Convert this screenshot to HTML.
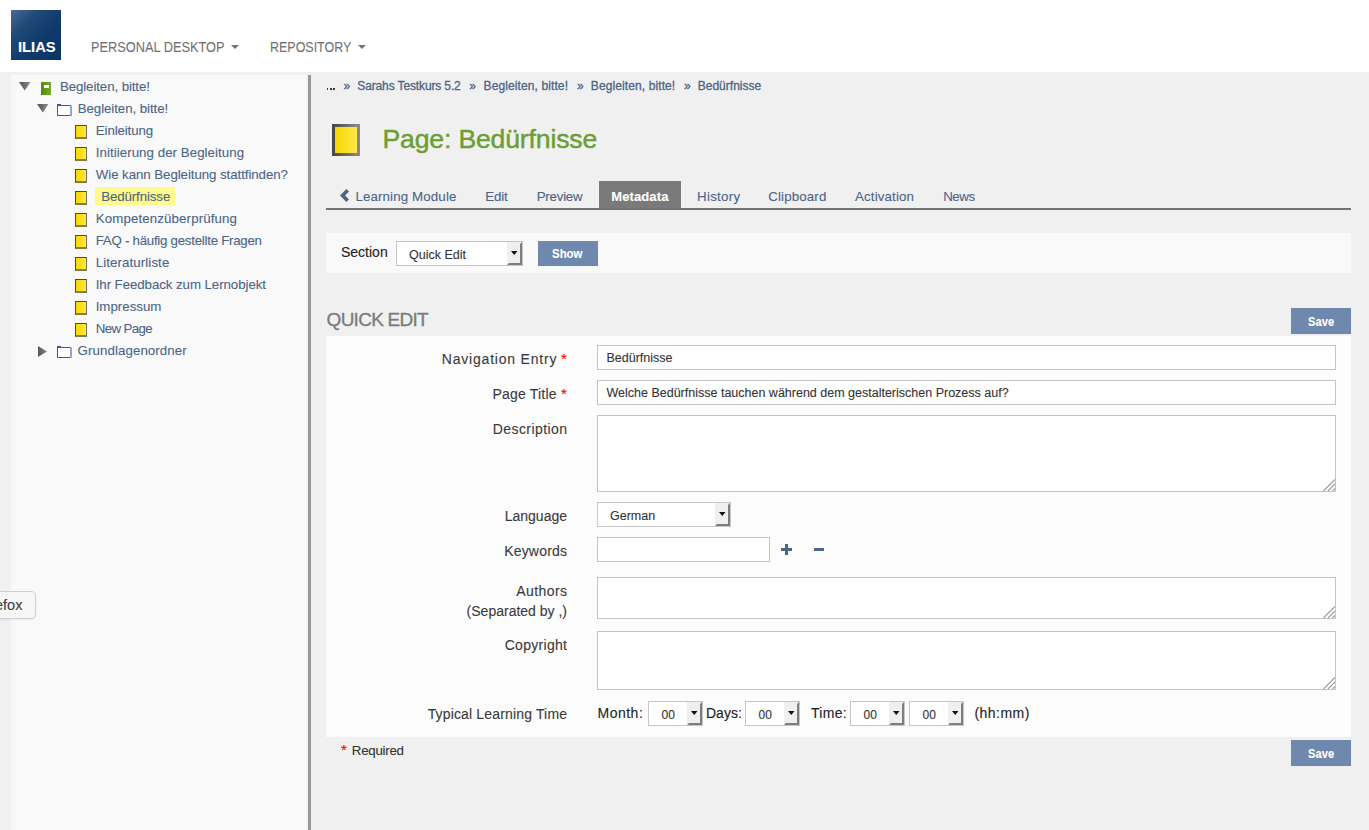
<!DOCTYPE html>
<html><head><meta charset="utf-8"><style>
html,body{margin:0;padding:0;width:1369px;height:830px;overflow:hidden;background:#f0f0f0;font-family:"Liberation Sans", sans-serif;}
.t{position:absolute;white-space:nowrap;-webkit-text-stroke:0.1px currentColor;}
.r{position:absolute;}
.pg{width:12px;height:14px;box-sizing:border-box;border:1px solid #4a4a4a;border-color:#4a4a4a #707070 #857c4c #4a4a4a;border-bottom-width:2px;background:linear-gradient(90deg,#f7d900,#ffe640);}
.ticon{width:28px;height:32px;box-sizing:border-box;border:3px solid #666;border-image:linear-gradient(90deg,#4a4a4a,#8a8a8a) 1;background:linear-gradient(90deg,#f5d600,#ffe84a);}
</style></head><body>
<div class="r" style="left:0px;top:0px;width:1369px;height:72px;background:#fff"></div>
<div class="r" style="left:11px;top:10px;width:50px;height:50px;background:linear-gradient(135deg,#4a6a94 0%,#1d4877 30%,#0f3a6b 60%,#0c3566 100%)"></div>
<div class="t" style="left:17.7px;top:39.35px;font-size:15.3px;line-height:15.3px;color:#fff;font-weight:700;letter-spacing:0px;transform:scaleX(0.9644);transform-origin:left center;">ILIAS</div>
<div class="t" style="left:91.4px;top:39.84px;font-size:14.6px;line-height:14.6px;color:#737373;font-weight:400;letter-spacing:0px;transform:scaleX(0.8757);transform-origin:left center;">PERSONAL DESKTOP</div>
<svg class="r" style="left:231px;top:45px" width="8" height="5" viewBox="0 0 8 5"><polygon points="0,0 8,0 4,4" fill="#737373"/></svg>
<div class="t" style="left:270.0px;top:39.84px;font-size:14.6px;line-height:14.6px;color:#737373;font-weight:400;letter-spacing:0px;transform:scaleX(0.8541);transform-origin:left center;">REPOSITORY</div>
<svg class="r" style="left:358px;top:45px" width="8" height="5" viewBox="0 0 8 5"><polygon points="0,0 8,0 4,4" fill="#737373"/></svg>
<div class="r" style="left:11px;top:75px;width:296px;height:755px;background:#f9f9f9"></div>
<div class="r" style="left:308px;top:75px;width:3px;height:755px;background:#999"></div>
<svg class="r" style="left:19px;top:82px" width="12" height="9" viewBox="0 0 12 9"><defs><linearGradient id="gd" x1="0" y1="0" x2="1" y2="0"><stop offset="0" stop-color="#505050"/><stop offset="1" stop-color="#909090"/></linearGradient></defs><polygon points="0,0 11.5,0 5.75,8.6" fill="url(#gd)"/></svg>
<div class="r" style="left:41px;top:82px;width:10px;height:13px;background:linear-gradient(90deg,#4f8a0c,#7aac2a)"></div>
<div class="r" style="left:44px;top:85px;width:5px;height:3px;background:#fff"></div>
<div class="t" style="left:59.9px;top:79.74px;font-size:13.3px;line-height:13.3px;color:#4c6586;font-weight:400;letter-spacing:-0.1px;">Begleiten, bitte!</div>
<svg class="r" style="left:37px;top:104px" width="12" height="9" viewBox="0 0 12 9"><defs><linearGradient id="gd" x1="0" y1="0" x2="1" y2="0"><stop offset="0" stop-color="#505050"/><stop offset="1" stop-color="#909090"/></linearGradient></defs><polygon points="0,0 11.5,0 5.75,8.6" fill="url(#gd)"/></svg>
<svg class="r" style="left:57px;top:104px" width="15" height="12" viewBox="0 0 15 12"><rect x="0" y="0" width="4" height="1.5" fill="#3d5a8a"/><rect x="0.5" y="1.5" width="13" height="10" fill="#fff" stroke="#3d5a8a" stroke-width="1"/><rect x="13" y="1.5" width="2" height="10.5" fill="#9aa6bd"/></svg>
<div class="t" style="left:77.7px;top:101.74px;font-size:13.3px;line-height:13.3px;color:#4c6586;font-weight:400;letter-spacing:-0.069px;">Begleiten, bitte!</div>
<div class="r pg" style="left:75px;top:125px"></div>
<div class="t" style="left:95.8px;top:123.74px;font-size:13.3px;line-height:13.3px;color:#4c6586;font-weight:400;letter-spacing:-0.121px;">Einleitung</div>
<div class="r pg" style="left:75px;top:147px"></div>
<div class="t" style="left:95.8px;top:145.74px;font-size:13.3px;line-height:13.3px;color:#4c6586;font-weight:400;letter-spacing:0.045px;">Initiierung der Begleitung</div>
<div class="r pg" style="left:75px;top:169px"></div>
<div class="t" style="left:95.8px;top:167.74px;font-size:13.3px;line-height:13.3px;color:#4c6586;font-weight:400;letter-spacing:-0.072px;">Wie kann Begleitung stattfinden?</div>
<div class="r pg" style="left:75px;top:191px"></div>
<div class="r" style="left:95px;top:187px;width:80px;height:18px;background:#fffa8c"></div>
<div class="t" style="left:101.2px;top:189.74px;font-size:13.3px;line-height:13.3px;color:#4c6586;font-weight:400;letter-spacing:-0.112px;">Bedürfnisse</div>
<div class="r pg" style="left:75px;top:213px"></div>
<div class="t" style="left:95.7px;top:211.74px;font-size:13.3px;line-height:13.3px;color:#4c6586;font-weight:400;letter-spacing:0.122px;">Kompetenzüberprüfung</div>
<div class="r pg" style="left:75px;top:235px"></div>
<div class="t" style="left:95.7px;top:233.74px;font-size:13.3px;line-height:13.3px;color:#4c6586;font-weight:400;letter-spacing:-0.263px;">FAQ - häufig gestellte Fragen</div>
<div class="r pg" style="left:75px;top:257px"></div>
<div class="t" style="left:95.7px;top:255.74px;font-size:13.3px;line-height:13.3px;color:#4c6586;font-weight:400;letter-spacing:0.091px;">Literaturliste</div>
<div class="r pg" style="left:75px;top:279px"></div>
<div class="t" style="left:95.7px;top:277.74px;font-size:13.3px;line-height:13.3px;color:#4c6586;font-weight:400;letter-spacing:-0.074px;">Ihr Feedback zum Lernobjekt</div>
<div class="r pg" style="left:75px;top:301px"></div>
<div class="t" style="left:95.7px;top:299.74px;font-size:13.3px;line-height:13.3px;color:#4c6586;font-weight:400;letter-spacing:-0.009px;">Impressum</div>
<div class="r pg" style="left:75px;top:323px"></div>
<div class="t" style="left:95.7px;top:321.74px;font-size:13.3px;line-height:13.3px;color:#4c6586;font-weight:400;letter-spacing:-0.611px;">New Page</div>
<svg class="r" style="left:38px;top:346px" width="9" height="11" viewBox="0 0 9 11"><defs><linearGradient id="gr" x1="0" y1="0" x2="1" y2="0"><stop offset="0" stop-color="#555"/><stop offset="1" stop-color="#888"/></linearGradient></defs><polygon points="0,0 9,5.5 0,11" fill="url(#gr)"/></svg>
<svg class="r" style="left:57px;top:346px" width="15" height="12" viewBox="0 0 15 12"><rect x="0" y="0" width="4" height="1.5" fill="#3d5a8a"/><rect x="0.5" y="1.5" width="13" height="10" fill="#fff" stroke="#3d5a8a" stroke-width="1"/><rect x="13" y="1.5" width="2" height="10.5" fill="#9aa6bd"/></svg>
<div class="t" style="left:77.6px;top:343.74px;font-size:13.3px;line-height:13.3px;color:#4c6586;font-weight:400;letter-spacing:0.078px;">Grundlagenordner</div>
<div class="r" style="left:-10px;top:591px;width:44px;height:26px;background:#f6f6f6;border:1px solid #cfcfcf;border-radius:5px;box-shadow:0 1px 2px rgba(0,0,0,.08)"></div>
<div class="t" style="left:-5px;top:597.73px;font-size:14.5px;line-height:14.5px;color:#404040;font-weight:400;letter-spacing:0px;">efox</div>
<div class="r" style="left:326.6px;top:88px;width:1.8px;height:2px;background:#3a3a3a"></div>
<div class="r" style="left:329.9px;top:88px;width:1.8px;height:2px;background:#3a3a3a"></div>
<div class="r" style="left:333px;top:88px;width:1.8px;height:2px;background:#3a3a3a"></div>
<div class="t" style="left:343.5px;top:79.84px;font-size:12px;line-height:12px;color:#4c6586;font-weight:400;letter-spacing:-0.76px;-webkit-text-stroke:0.3px #4c6586;">»</div>
<div class="t" style="left:469.2px;top:79.84px;font-size:12px;line-height:12px;color:#4c6586;font-weight:400;letter-spacing:-0.96px;-webkit-text-stroke:0.3px #4c6586;">»</div>
<div class="t" style="left:577.0px;top:79.84px;font-size:12px;line-height:12px;color:#4c6586;font-weight:400;letter-spacing:-1.66px;-webkit-text-stroke:0.3px #4c6586;">»</div>
<div class="t" style="left:684.0px;top:79.84px;font-size:12px;line-height:12px;color:#4c6586;font-weight:400;letter-spacing:-1.66px;-webkit-text-stroke:0.3px #4c6586;">»</div>
<div class="t" style="left:357.3px;top:79.84px;font-size:12px;line-height:12px;color:#4c6586;font-weight:400;letter-spacing:-0.13px;-webkit-text-stroke:0.3px #4c6586;">Sarahs Testkurs 5.2</div>
<div class="t" style="left:483.6px;top:79.84px;font-size:12px;line-height:12px;color:#4c6586;font-weight:400;letter-spacing:0.104px;-webkit-text-stroke:0.3px #4c6586;">Begleiten, bitte!</div>
<div class="t" style="left:590.8px;top:79.84px;font-size:12px;line-height:12px;color:#4c6586;font-weight:400;letter-spacing:0.104px;-webkit-text-stroke:0.3px #4c6586;">Begleiten, bitte!</div>
<div class="t" style="left:697.7px;top:79.84px;font-size:12px;line-height:12px;color:#4c6586;font-weight:400;letter-spacing:0.014px;-webkit-text-stroke:0.3px #4c6586;">Bedürfnisse</div>
<div class="r ticon" style="left:332px;top:124px"></div>
<div class="t" style="left:382.5px;top:126.48px;font-size:26.6px;line-height:26.6px;color:#6c9e34;font-weight:400;letter-spacing:-0.164px;-webkit-text-stroke:0.45px #6c9e34;">Page: Bedürfnisse</div>
<div class="r" style="left:326px;top:208px;width:1025px;height:2px;background:#737373"></div>
<div class="r" style="left:599px;top:181px;width:82px;height:27px;background:#7a7a7a"></div>
<svg class="r" style="left:340px;top:189px" width="10" height="13" viewBox="0 0 10 13"><polygon points="0,6.5 6.4,0 9,2.5 5.1,6.5 9,10.5 6.4,13" fill="#4c6586"/></svg>
<div class="t" style="left:355.4px;top:189.74px;font-size:13.3px;line-height:13.3px;color:#4c6586;font-weight:400;letter-spacing:0.137px;">Learning Module</div>
<div class="t" style="left:485.3px;top:189.74px;font-size:13.3px;line-height:13.3px;color:#4c6586;font-weight:400;letter-spacing:-0.181px;">Edit</div>
<div class="t" style="left:536.7px;top:189.74px;font-size:13.3px;line-height:13.3px;color:#4c6586;font-weight:400;letter-spacing:-0.225px;">Preview</div>
<div class="t" style="left:697.1px;top:189.74px;font-size:13.3px;line-height:13.3px;color:#4c6586;font-weight:400;letter-spacing:0.273px;">History</div>
<div class="t" style="left:768.3px;top:189.74px;font-size:13.3px;line-height:13.3px;color:#4c6586;font-weight:400;letter-spacing:0.134px;">Clipboard</div>
<div class="t" style="left:855.0px;top:189.74px;font-size:13.3px;line-height:13.3px;color:#4c6586;font-weight:400;letter-spacing:0.149px;">Activation</div>
<div class="t" style="left:943.2px;top:189.74px;font-size:13.3px;line-height:13.3px;color:#4c6586;font-weight:400;letter-spacing:-0.417px;">News</div>
<div class="t" style="left:611.3px;top:190.00px;font-size:13px;line-height:13px;color:#fff;font-weight:700;letter-spacing:0.102px;">Metadata</div>
<div class="r" style="left:326px;top:233px;width:1025px;height:40px;background:#f9f9f9"></div>
<div class="t" style="left:341px;top:245.15px;font-size:14px;line-height:14px;color:#222;font-weight:400;letter-spacing:0px;">Section</div>
<div class="r" style="left:396px;top:241px;width:127px;height:25px;background:#fff;box-sizing:border-box;border:1px solid #c6c6c6"></div>
<svg class="r" style="left:507px;top:242px" width="15" height="23" viewBox="0 0 15 23"><rect x="0" y="0" width="15" height="23" fill="#efefef"/><polygon points="15,0 15,23 0,23 2,21 13,21 13,2" fill="#7d7d7d"/></svg>
<svg class="r" style="left:511px;top:251px" width="7" height="4" viewBox="0 0 7 4"><polygon points="0,0 6.5,0 3.25,4" fill="#111"/></svg>
<div class="t" style="left:409px;top:249.22px;font-size:12.5px;line-height:12.5px;color:#333;font-weight:400;letter-spacing:0px;">Quick Edit</div>
<div class="r" style="left:538px;top:241px;width:60px;height:25px;background:#6f88ad"></div>
<div class="t" style="left:552px;top:247.00px;font-size:13px;line-height:13px;color:#fff;font-weight:700;letter-spacing:0px;transform:scaleX(0.88);transform-origin:left center;">Show</div>
<div class="t" style="left:326.6px;top:309.92px;font-size:19px;line-height:19px;color:#7c7c7c;font-weight:400;letter-spacing:-0.742px;-webkit-text-stroke:0.35px #7c7c7c;">QUICK EDIT</div>
<div class="r" style="left:1291px;top:308px;width:60px;height:26px;background:#6f88ad"></div>
<div class="t" style="left:1307.5px;top:315.00px;font-size:13px;line-height:13px;color:#fff;font-weight:700;letter-spacing:0px;transform:scaleX(0.86);transform-origin:left center;">Save</div>
<div class="r" style="left:326px;top:336px;width:1025px;height:401px;background:#fcfcfc"></div>
<div class="t" style="right:811.7px;top:352.15px;font-size:14px;line-height:14px;color:#3a3a3a;font-weight:400;letter-spacing:0.8px;">Navigation Entry</div>
<div class="t" style="right:802.2px;top:351.30px;font-size:15px;line-height:15px;color:#f00;font-weight:400;letter-spacing:0px;">*</div>
<div class="r" style="left:597px;top:345px;width:739px;height:25px;background:#fff;box-sizing:border-box;border:1px solid #c4c4c4"></div>
<div class="t" style="left:606.5px;top:351.92px;font-size:12.5px;line-height:12.5px;color:#333;font-weight:400;letter-spacing:0px;">Bedürfnisse</div>
<div class="t" style="right:812.3px;top:386.65px;font-size:14px;line-height:14px;color:#3a3a3a;font-weight:400;letter-spacing:0.2px;">Page Title</div>
<div class="t" style="right:802.2px;top:385.80px;font-size:15px;line-height:15px;color:#f00;font-weight:400;letter-spacing:0px;">*</div>
<div class="r" style="left:597px;top:380px;width:739px;height:25px;background:#fff;box-sizing:border-box;border:1px solid #c4c4c4"></div>
<div class="t" style="left:606.5px;top:386.92px;font-size:12.5px;line-height:12.5px;color:#333;font-weight:400;letter-spacing:0px;">Welche Bedürfnisse tauchen während dem gestalterischen Prozess auf?</div>
<div class="t" style="right:801.58px;top:421.65px;font-size:14px;line-height:14px;color:#3a3a3a;font-weight:400;letter-spacing:0.42px;">Description</div>
<div class="r" style="left:597px;top:415px;width:739px;height:77px;background:#fff;box-sizing:border-box;border:1px solid #c4c4c4"></div>
<svg class="r" style="left:1323px;top:479px" width="12" height="12" viewBox="0 0 12 12"><path d="M0.5,12 L12,0.5 M5,12 L12,5 M9.5,12 L12,9.5" stroke="#999" stroke-width="1.1"/></svg>
<div class="t" style="right:802px;top:509.15px;font-size:14px;line-height:14px;color:#3a3a3a;font-weight:400;letter-spacing:0px;">Language</div>
<div class="r" style="left:597px;top:502px;width:134px;height:25px;background:#fff;box-sizing:border-box;border:1px solid #c6c6c6"></div>
<svg class="r" style="left:715px;top:503px" width="15" height="23" viewBox="0 0 15 23"><rect x="0" y="0" width="15" height="23" fill="#efefef"/><polygon points="15,0 15,23 0,23 2,21 13,21 13,2" fill="#7d7d7d"/></svg>
<svg class="r" style="left:719px;top:512px" width="7" height="4" viewBox="0 0 7 4"><polygon points="0,0 6.5,0 3.25,4" fill="#111"/></svg>
<div class="t" style="left:610px;top:510.22px;font-size:12.5px;line-height:12.5px;color:#333;font-weight:400;letter-spacing:0px;">German</div>
<div class="t" style="right:801.8px;top:543.65px;font-size:14px;line-height:14px;color:#3a3a3a;font-weight:400;letter-spacing:0.2px;">Keywords</div>
<div class="r" style="left:597px;top:537px;width:173px;height:25px;background:#fff;box-sizing:border-box;border:1px solid #c4c4c4"></div>
<div class="r" style="left:781px;top:548px;width:11px;height:3px;background:#4c6586"></div>
<div class="r" style="left:785px;top:544px;width:3px;height:11px;background:#4c6586"></div>
<div class="r" style="left:814px;top:548px;width:10px;height:3px;background:#4c6586"></div>
<div class="t" style="right:801.6px;top:584.15px;font-size:14px;line-height:14px;color:#3a3a3a;font-weight:400;letter-spacing:0.4px;">Authors</div>
<div class="t" style="right:802px;top:604.15px;font-size:14px;line-height:14px;color:#3a3a3a;font-weight:400;letter-spacing:0px;">(Separated by ,)</div>
<div class="r" style="left:597px;top:577px;width:739px;height:42px;background:#fff;box-sizing:border-box;border:1px solid #c4c4c4"></div>
<svg class="r" style="left:1323px;top:606px" width="12" height="12" viewBox="0 0 12 12"><path d="M0.5,12 L12,0.5 M5,12 L12,5 M9.5,12 L12,9.5" stroke="#999" stroke-width="1.1"/></svg>
<div class="t" style="right:801.7px;top:638.15px;font-size:14px;line-height:14px;color:#3a3a3a;font-weight:400;letter-spacing:0.3px;">Copyright</div>
<div class="r" style="left:597px;top:631px;width:739px;height:59px;background:#fff;box-sizing:border-box;border:1px solid #c4c4c4"></div>
<svg class="r" style="left:1323px;top:677px" width="12" height="12" viewBox="0 0 12 12"><path d="M0.5,12 L12,0.5 M5,12 L12,5 M9.5,12 L12,9.5" stroke="#999" stroke-width="1.1"/></svg>
<div class="t" style="right:801.84px;top:707.15px;font-size:14px;line-height:14px;color:#3a3a3a;font-weight:400;letter-spacing:0.16px;">Typical Learning Time</div>
<div class="t" style="left:597.5px;top:706.15px;font-size:14px;line-height:14px;color:#222;font-weight:400;letter-spacing:0.5px;">Month:</div>
<div class="r" style="left:648px;top:701px;width:55px;height:25px;background:#fff;box-sizing:border-box;border:1px solid #c6c6c6"></div>
<svg class="r" style="left:687px;top:702px" width="15" height="23" viewBox="0 0 15 23"><rect x="0" y="0" width="15" height="23" fill="#efefef"/><polygon points="15,0 15,23 0,23 2,21 13,21 13,2" fill="#7d7d7d"/></svg>
<svg class="r" style="left:691px;top:711px" width="7" height="4" viewBox="0 0 7 4"><polygon points="0,0 6.5,0 3.25,4" fill="#111"/></svg>
<div class="t" style="left:661.5px;top:709.14px;font-size:12px;line-height:12px;color:#333;font-weight:400;letter-spacing:0px;">00</div>
<div class="t" style="left:706px;top:706.15px;font-size:14px;line-height:14px;color:#222;font-weight:400;letter-spacing:0px;">Days:</div>
<div class="r" style="left:745px;top:701px;width:55px;height:25px;background:#fff;box-sizing:border-box;border:1px solid #c6c6c6"></div>
<svg class="r" style="left:784px;top:702px" width="15" height="23" viewBox="0 0 15 23"><rect x="0" y="0" width="15" height="23" fill="#efefef"/><polygon points="15,0 15,23 0,23 2,21 13,21 13,2" fill="#7d7d7d"/></svg>
<svg class="r" style="left:788px;top:711px" width="7" height="4" viewBox="0 0 7 4"><polygon points="0,0 6.5,0 3.25,4" fill="#111"/></svg>
<div class="t" style="left:758.5px;top:709.14px;font-size:12px;line-height:12px;color:#333;font-weight:400;letter-spacing:0px;">00</div>
<div class="t" style="left:811px;top:706.15px;font-size:14px;line-height:14px;color:#222;font-weight:400;letter-spacing:0.3px;">Time:</div>
<div class="r" style="left:850px;top:701px;width:55px;height:25px;background:#fff;box-sizing:border-box;border:1px solid #c6c6c6"></div>
<svg class="r" style="left:889px;top:702px" width="15" height="23" viewBox="0 0 15 23"><rect x="0" y="0" width="15" height="23" fill="#efefef"/><polygon points="15,0 15,23 0,23 2,21 13,21 13,2" fill="#7d7d7d"/></svg>
<svg class="r" style="left:893px;top:711px" width="7" height="4" viewBox="0 0 7 4"><polygon points="0,0 6.5,0 3.25,4" fill="#111"/></svg>
<div class="t" style="left:863.5px;top:709.14px;font-size:12px;line-height:12px;color:#333;font-weight:400;letter-spacing:0px;">00</div>
<div class="r" style="left:909px;top:701px;width:55px;height:25px;background:#fff;box-sizing:border-box;border:1px solid #c6c6c6"></div>
<svg class="r" style="left:948px;top:702px" width="15" height="23" viewBox="0 0 15 23"><rect x="0" y="0" width="15" height="23" fill="#efefef"/><polygon points="15,0 15,23 0,23 2,21 13,21 13,2" fill="#7d7d7d"/></svg>
<svg class="r" style="left:952px;top:711px" width="7" height="4" viewBox="0 0 7 4"><polygon points="0,0 6.5,0 3.25,4" fill="#111"/></svg>
<div class="t" style="left:922.5px;top:709.14px;font-size:12px;line-height:12px;color:#333;font-weight:400;letter-spacing:0px;">00</div>
<div class="t" style="left:974.5px;top:706.15px;font-size:14px;line-height:14px;color:#222;font-weight:400;letter-spacing:0.45px;">(hh:mm)</div>
<div class="t" style="left:341px;top:742.30px;font-size:15px;line-height:15px;color:#f00;font-weight:400;letter-spacing:0px;">*</div>
<div class="t" style="left:351.8px;top:743.74px;font-size:13.3px;line-height:13.3px;color:#333;font-weight:400;letter-spacing:-0.257px;">Required</div>
<div class="r" style="left:1291px;top:740px;width:60px;height:26px;background:#6f88ad"></div>
<div class="t" style="left:1307.5px;top:747.00px;font-size:13px;line-height:13px;color:#fff;font-weight:700;letter-spacing:0px;transform:scaleX(0.86);transform-origin:left center;">Save</div>
</body></html>
